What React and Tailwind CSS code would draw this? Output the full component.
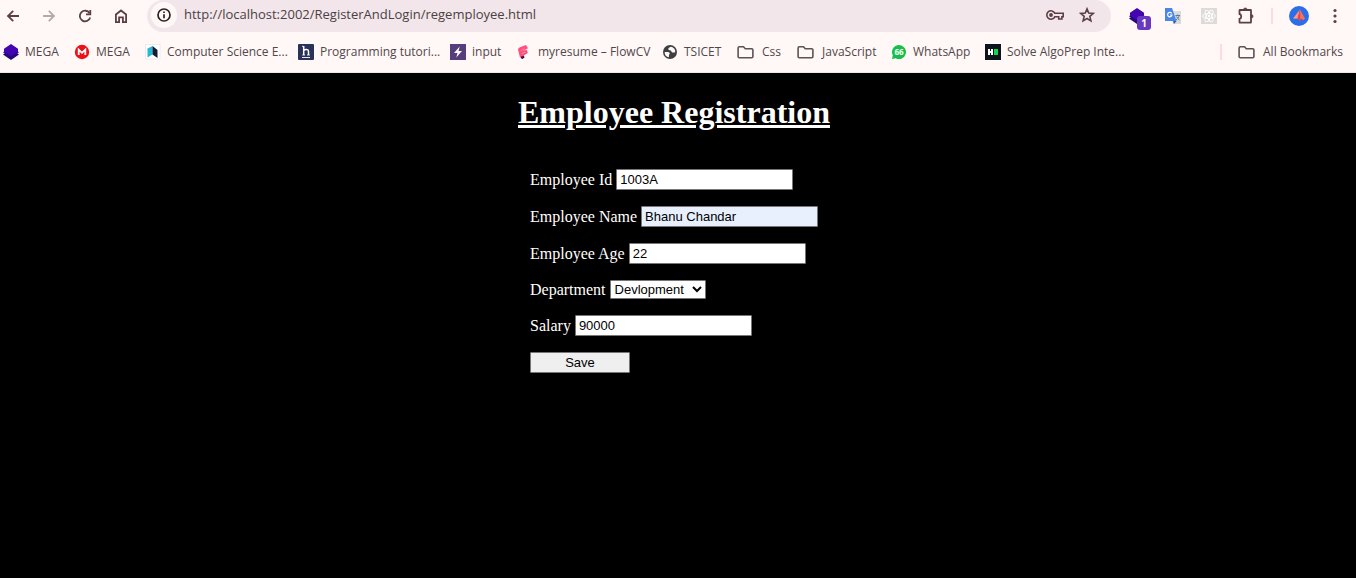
import React from 'react';

const stroke = { fill: 'none', stroke: 'currentColor', strokeWidth: 1.8 };

const BackIcon = () => (
  <svg viewBox="0 0 16 16" className="size-4" {...stroke}><path d="M14 8H3.500M8.200 2.800 3 8l5.200 5.200" /></svg>
);
const ForwardIcon = () => (
  <svg viewBox="0 0 16 16" className="size-4" {...stroke}><path d="M2 8h10.500M7.800 2.800 13 8l-5.200 5.200" /></svg>
);
const ReloadIcon = () => (
  <svg viewBox="0 0 16 16" className="size-4" {...stroke}>
    <path d="M13.200 9.500A5.300 5.300 0 1 1 12.600 5.200" /><path d="M9 6.300h4.300V2" />
  </svg>
);
const HomeIcon = () => (
  <svg viewBox="0 0 16 16" className="size-4" {...stroke}><path d="M2.900 6.500 8 2.500l5.100 4v7.600H9.900V9.400H6.100v4.700H2.900Z" /></svg>
);
const InfoIcon = () => (
  <svg viewBox="0 0 16 16" className="size-4" fill="none" stroke="#2b2124" strokeWidth="1.7">
    <circle cx="8" cy="8" r="6" /><path d="M8 7.2v4M8 4.5v1.6" />
  </svg>
);
const KeyIcon = () => (
  <svg viewBox="0 0 20 16" className="h-4 w-5" fill="none" stroke="currentColor" strokeWidth="1.6">
    <path d="M9.800 6.200h8.400v3.600h-1.300V12h-3.200V9.800H9.800a4.200 4.200 0 1 1 0-3.600Z" /><circle cx="6" cy="8" r="1.100" fill="currentColor" />
  </svg>
);
const StarIcon = () => (
  <svg viewBox="0 0 16 16" className="size-4" fill="none" stroke="currentColor" strokeWidth="1.600">
    <path d="m8 1.900 1.700 4.200 4.600.3-3.500 3 1.100 4.500L8 11.500l-3.900 2.400 1.100-4.500-3.500-3 4.600-.3Z" />
  </svg>
);
const PuzzleIcon = () => (
  <svg viewBox="0 0 18 18" className="size-[18px]" {...stroke}>
    <path d="M2.500 3.500q0-.5.5-.5h10.500q.5 0 .5.500v11.700q0 .5-.5.500H3q-.5 0-.5-.5v-3.400c2.300-.4 2.300-4.400 0-4.800Z" />
    <path d="M6.500 2.800a1.800 1.800 0 0 1 3.600 0ZM14.200 7.500a1.800 1.800 0 0 1 0 3.600Z" fill="currentColor" strokeWidth=".8" />
  </svg>
);
const MenuIcon = () => (
  <svg viewBox="0 0 16 16" className="size-4" fill="currentColor">
    <circle cx="8" cy="2.500" r="1.600" /><circle cx="8" cy="8" r="1.600" /><circle cx="8" cy="13.500" r="1.600" />
  </svg>
);
const LayersIcon = () => (
  <svg viewBox="0 0 16 16" className="size-4">
    <path d="m0 10.500 2.500-1.700h11l2.500 1.700L8 16Z" fill="#230a78" />
    <path d="M0 8.200 2.500 6.500h11L16 8.200l-8 5.300Z" fill="#2c0688" />
    <path d="m1 4.800 7-4.800 7 4.800v3L8 12.300 1 7.800Z" fill="#4305b0" />
  </svg>
);
const MegaIcon = () => (
  <svg viewBox="0 0 16 16" className="size-4">
    <circle cx="8" cy="8" r="7.2" fill="#ed1018" />
    <path d="M4.700 11V5.600L8 8.800l3.300-3.200V11" fill="none" stroke="#fff" strokeWidth="1.800" />
  </svg>
);
const ScienceIcon = () => (
  <svg viewBox="0 0 16 16" className="size-4">
    <path d="M.5.5h14.500v14.500H.5Z" fill="#fff" stroke="#ece8ec" />
    <path d="M2.500 4.500 7.500 2v8.500l-5 3Z" fill="#25b8d5" /><path d="m7.500 2 5 4v8l-5-3.500Z" fill="#111c33" />
  </svg>
);
const HIcon = () => (
  <svg viewBox="0 0 16 16" className="size-4">
    <rect width="16" height="16" rx="1" fill="#28325a" />
    <path d="M5.700 2v9M5.700 6.400c1.300-1.400 4.800-1.500 4.800.9V11" fill="none" stroke="#fff" strokeWidth="1.500" />
    <path d="M4 2.300h1.500M4.300 11h2.800M9 11h2.800M4 13.500h8" fill="none" stroke="#fff" strokeWidth=".9" />
  </svg>
);
const BoltIcon = () => (
  <svg viewBox="0 0 16 16" className="size-4">
    <path d="M0 0h16v16H0Z" fill="#563d7c" /><path d="M9.700 2.500 4 9h3.500l-1.200 4.500L12 7H8.500Z" fill="#fff" />
  </svg>
);
const FlowIcon = () => (
  <svg viewBox="0 0 16 16" className="size-4">
    <path d="M2 5.500Q2 4 4 3.300L10 1l2 3.300-5 2.400 3.800-1 1 3.300-3.600 2.300L7 14l-3-.5Z" fill="#ff4f7d" />
    <path d="m4.500 6.800 4-2M5.500 9.800 9.500 8" stroke="#ff86a6" strokeWidth="1" /><path d="m5 12.500 3-.6.500 1.600L6.500 15 5 14.300Z" fill="#32104d" />
  </svg>
);
const GlobeIcon = () => (
  <svg viewBox="0 0 16 16" className="size-4">
    <circle cx="8" cy="8" r="7" fill="#3c4043" />
    <path d="M2.700 8c3-.3 5 0 5 1.300S6.500 10.800 7 13.300C4.500 13 2.500 11 2.700 8ZM9 2.700C7.500 3.500 6 4 6.300 5.300S9 6 9.300 7.200c.3 1.300 1.700 1.500 3.900 1C13.500 5.500 12 3.300 9 2.700Z" fill="#fff8f6" />
  </svg>
);
const FolderIcon = () => (
  <svg viewBox="0 0 17 16" className="h-4 w-[17px] text-[#5f5154]" fill="none" stroke="currentColor" strokeWidth="1.600">
    <path d="M2.300 2.800h4.200l1.800 2h6.400q1.200 0 1.200 1.200v6.600q0 1.200-1.200 1.200H2.300q-1.200 0-1.200-1.200V4q0-1.200 1.200-1.200Z" />
  </svg>
);
const WhatsAppIcon = () => (
  <svg viewBox="0 0 16 16" className="size-4">
    <path d="M8 1a7 7 0 1 1-3.300 13.200L1 15l.8-3.700A7 7 0 0 1 8 1Z" fill="#17bf4a" />
    <text x="8" y="10.800" textAnchor="middle" fill="#fff" fontSize="8" fontWeight="700" fontFamily="Open Sans, sans-serif">66</text>
  </svg>
);
const HackerIcon = () => (
  <svg viewBox="0 0 16 16" className="size-4">
    <path d="M0 0h16v16H0Z" fill="#0e141e" /><path d="M4 5v6M7 5v6M4 8h3" stroke="#fff" strokeWidth="2" /><path d="M9 5h4v6H9Z" fill="#10d653" />
  </svg>
);
const TranslateIcon = () => (
  <svg viewBox="0 0 16 16" className="size-4">
    <path d="M6 3h10v13H8Z" fill="#d9dbdc" /><path d="M0 0h7l4.500 13H0Z" fill="#4a86e8" /><path d="M8 13h3.500L9 16Z" fill="#2a56c6" />
    <path d="M6.600 5.300A2.200 2.200 0 1 0 7 7H5" fill="none" stroke="#fff" strokeWidth="1.200" />
    <path d="M10.500 7.500H15M12.700 6.500v1M14 8c-.5 2-1.500 3-3 4M11.500 8.500c.7 1.500 1.700 2.500 3 3.500" fill="none" stroke="#607d8b" />
  </svg>
);
const ReactIcon = () => (
  <svg viewBox="0 0 16 16" className="size-4">
    <path d="M0 0h16v16H0Z" fill="#dedad8" />
    <g fill="none" stroke="#fff" strokeWidth=".9">
      <ellipse cx="8" cy="8" rx="6.500" ry="2.500" /><ellipse cx="8" cy="8" rx="6.500" ry="2.500" transform="rotate(60 8 8)" />
      <ellipse cx="8" cy="8" rx="6.500" ry="2.500" transform="rotate(120 8 8)" />
    </g>
    <circle cx="8" cy="8" r="1.200" fill="#fff" />
  </svg>
);
const AvatarIcon = () => (
  <svg viewBox="0 0 20 20" className="size-5">
    <circle cx="10" cy="10" r="10" fill="#2b6eea" />
    <path d="M11 3.500 4 12.500l4.800.2Z" fill="#ff9a80" /><path d="M11 3.500 8.300 12.700l3.500 3Z" fill="#e5484b" /><path d="m11 3.500 5 9-1.500 1.500-3.300-1.500Z" fill="#ff6d5a" />
  </svg>
);

const bookmarks = [
  { label: 'MEGA', Icon: LayersIcon, width: 'w-[71px]' },
  { label: 'MEGA', Icon: MegaIcon, width: 'w-[71px]' },
  { label: 'Computer Science E...', Icon: ScienceIcon, width: 'w-[153px]' },
  { label: 'Programming tutori...', Icon: HIcon, width: 'w-[152px]' },
  { label: 'input', Icon: BoltIcon, width: 'w-[66px]' },
  { label: 'myresume – FlowCV', Icon: FlowIcon, width: 'w-[146px]' },
  { label: 'TSICET', Icon: GlobeIcon, width: 'w-[75px]' },
  { label: 'Css', Icon: FolderIcon, width: 'w-[60px]', folder: true },
  { label: 'JavaScript', Icon: FolderIcon, width: 'w-[94px]', folder: true },
  { label: 'WhatsApp', Icon: WhatsAppIcon, width: 'w-[94px]' },
  { label: 'Solve AlgoPrep Inte...', Icon: HackerIcon, width: 'w-[150px]' },
];

function Toolbar() {
  return (
    <div className="flex h-8 items-center pr-[13px] pl-[5px] text-[#5b3f44]">
      <nav aria-label="Browser" className="flex h-[30px] items-center gap-5">
        <button aria-label="Back"><BackIcon /></button>
        <button aria-label="Forward" className="text-[#b5a9aa]"><ForwardIcon /></button>
        <button aria-label="Reload"><ReloadIcon /></button>
        <button aria-label="Home"><HomeIcon /></button>
      </nav>
      <div className="ml-[18px] flex h-8 min-w-0 flex-1 items-center rounded-2xl bg-[#f2e6ea] pb-0.5 pr-4 pl-1">
        <button aria-label="Site information" className="flex size-[26px] shrink-0 items-center justify-center rounded-full bg-[#fff8f7]"><InfoIcon /></button>
        <input aria-label="Address" defaultValue="http://localhost:2002/RegisterAndLogin/regemployee.html" className="ml-[7px] min-w-0 flex-1 bg-transparent text-[13px] text-[#4a4145] outline-none" />
        <button aria-label="Passwords" className="mr-3.5"><KeyIcon /></button>
        <button aria-label="Bookmark this page"><StarIcon /></button>
      </div>
      <div className="ml-[18px] flex h-[30px] items-center">
        <button aria-label="Extension, 1 item" className="relative mr-5">
          <LayersIcon />
          <span className="absolute top-2 left-2 flex size-3.5 items-center justify-center rounded-[3px] bg-[#6938c0] text-[10px] leading-none font-bold text-white">1</span>
        </button>
        <button aria-label="Translate" className="mr-5"><TranslateIcon /></button>
        <button aria-label="React tools" className="mr-5"><ReactIcon /></button>
        <button aria-label="Extensions"><PuzzleIcon /></button>
        <span className="ml-4 h-4 w-0.5 bg-[#ffdae2]" />
        <button aria-label="Profile" className="ml-4"><AvatarIcon /></button>
        <button aria-label="Menu" className="ml-[18px]"><MenuIcon /></button>
      </div>
    </div>
  );
}

function BookmarkBar() {
  return (
    <nav aria-label="Bookmarks" className="flex h-10 items-center pr-[13px] pl-[3px] text-xs text-[#51474a]">
      {bookmarks.map(({ label, Icon, width, folder }, i) => (
        <a key={i} href="#" className={`flex shrink-0 items-center whitespace-nowrap ${width} ${folder ? 'gap-2' : 'gap-1.5'}`}>
          <Icon />{label}
        </a>
      ))}
      <span className="ml-auto h-4 w-0.5 shrink-0 bg-[#ffdae2]" />
      <a href="#" className="ml-4 flex shrink-0 items-center gap-2 whitespace-nowrap"><FolderIcon />All Bookmarks</a>
    </nav>
  );
}

const control = "rounded-[1px] border border-[#767676] text-[13px] leading-4 text-black font-['Liberation_Sans',Arial,sans-serif]";

function Field({ id, label, value, fill = 'bg-white' }) {
  return (
    <div className="flex items-center gap-1">
      <label htmlFor={id}>{label}</label>
      <input id={id} defaultValue={value} className={`h-[21px] w-[177px] px-[3px] ${control} ${fill}`} />
    </div>
  );
}

export default function App() {
  return (
    <div className="flex min-h-screen flex-col bg-black">
      <header className="border-b border-[#f2e6ea] bg-[#fff8f7] font-['Open_Sans',sans-serif]">
        <Toolbar />
        <BookmarkBar />
      </header>
      <main className="flex justify-center pt-[21px] pr-2 font-['Liberation_Serif','Times_New_Roman',serif] text-white">
        <div>
          <h1 className="text-[32px] leading-9 font-bold underline">Employee Registration</h1>
          <form className="mt-[39px] flex flex-col gap-4 pl-3 text-base leading-[19px] whitespace-nowrap" onSubmit={(e) => e.preventDefault()}>
            <Field id="emp-id" label="Employee Id" value="1003A" />
            <Field id="emp-name" label="Employee Name" value="Bhanu Chandar" fill="bg-[#e8f0fe]" />
            <Field id="emp-age" label="Employee Age" value="22" />
            <div className="flex items-center gap-1">
              <label htmlFor="department">Department</label>
              <select id="department" className={`h-[19px] w-24 appearance-auto bg-white ${control}`}>
                <option>Devlopment</option>
              </select>
            </div>
            <Field id="salary" label="Salary" value="90000" />
            <button type="submit" className={`h-[21px] w-[100px] bg-[#efefef] ${control}`}>Save</button>
          </form>
        </div>
      </main>
    </div>
  );
}
